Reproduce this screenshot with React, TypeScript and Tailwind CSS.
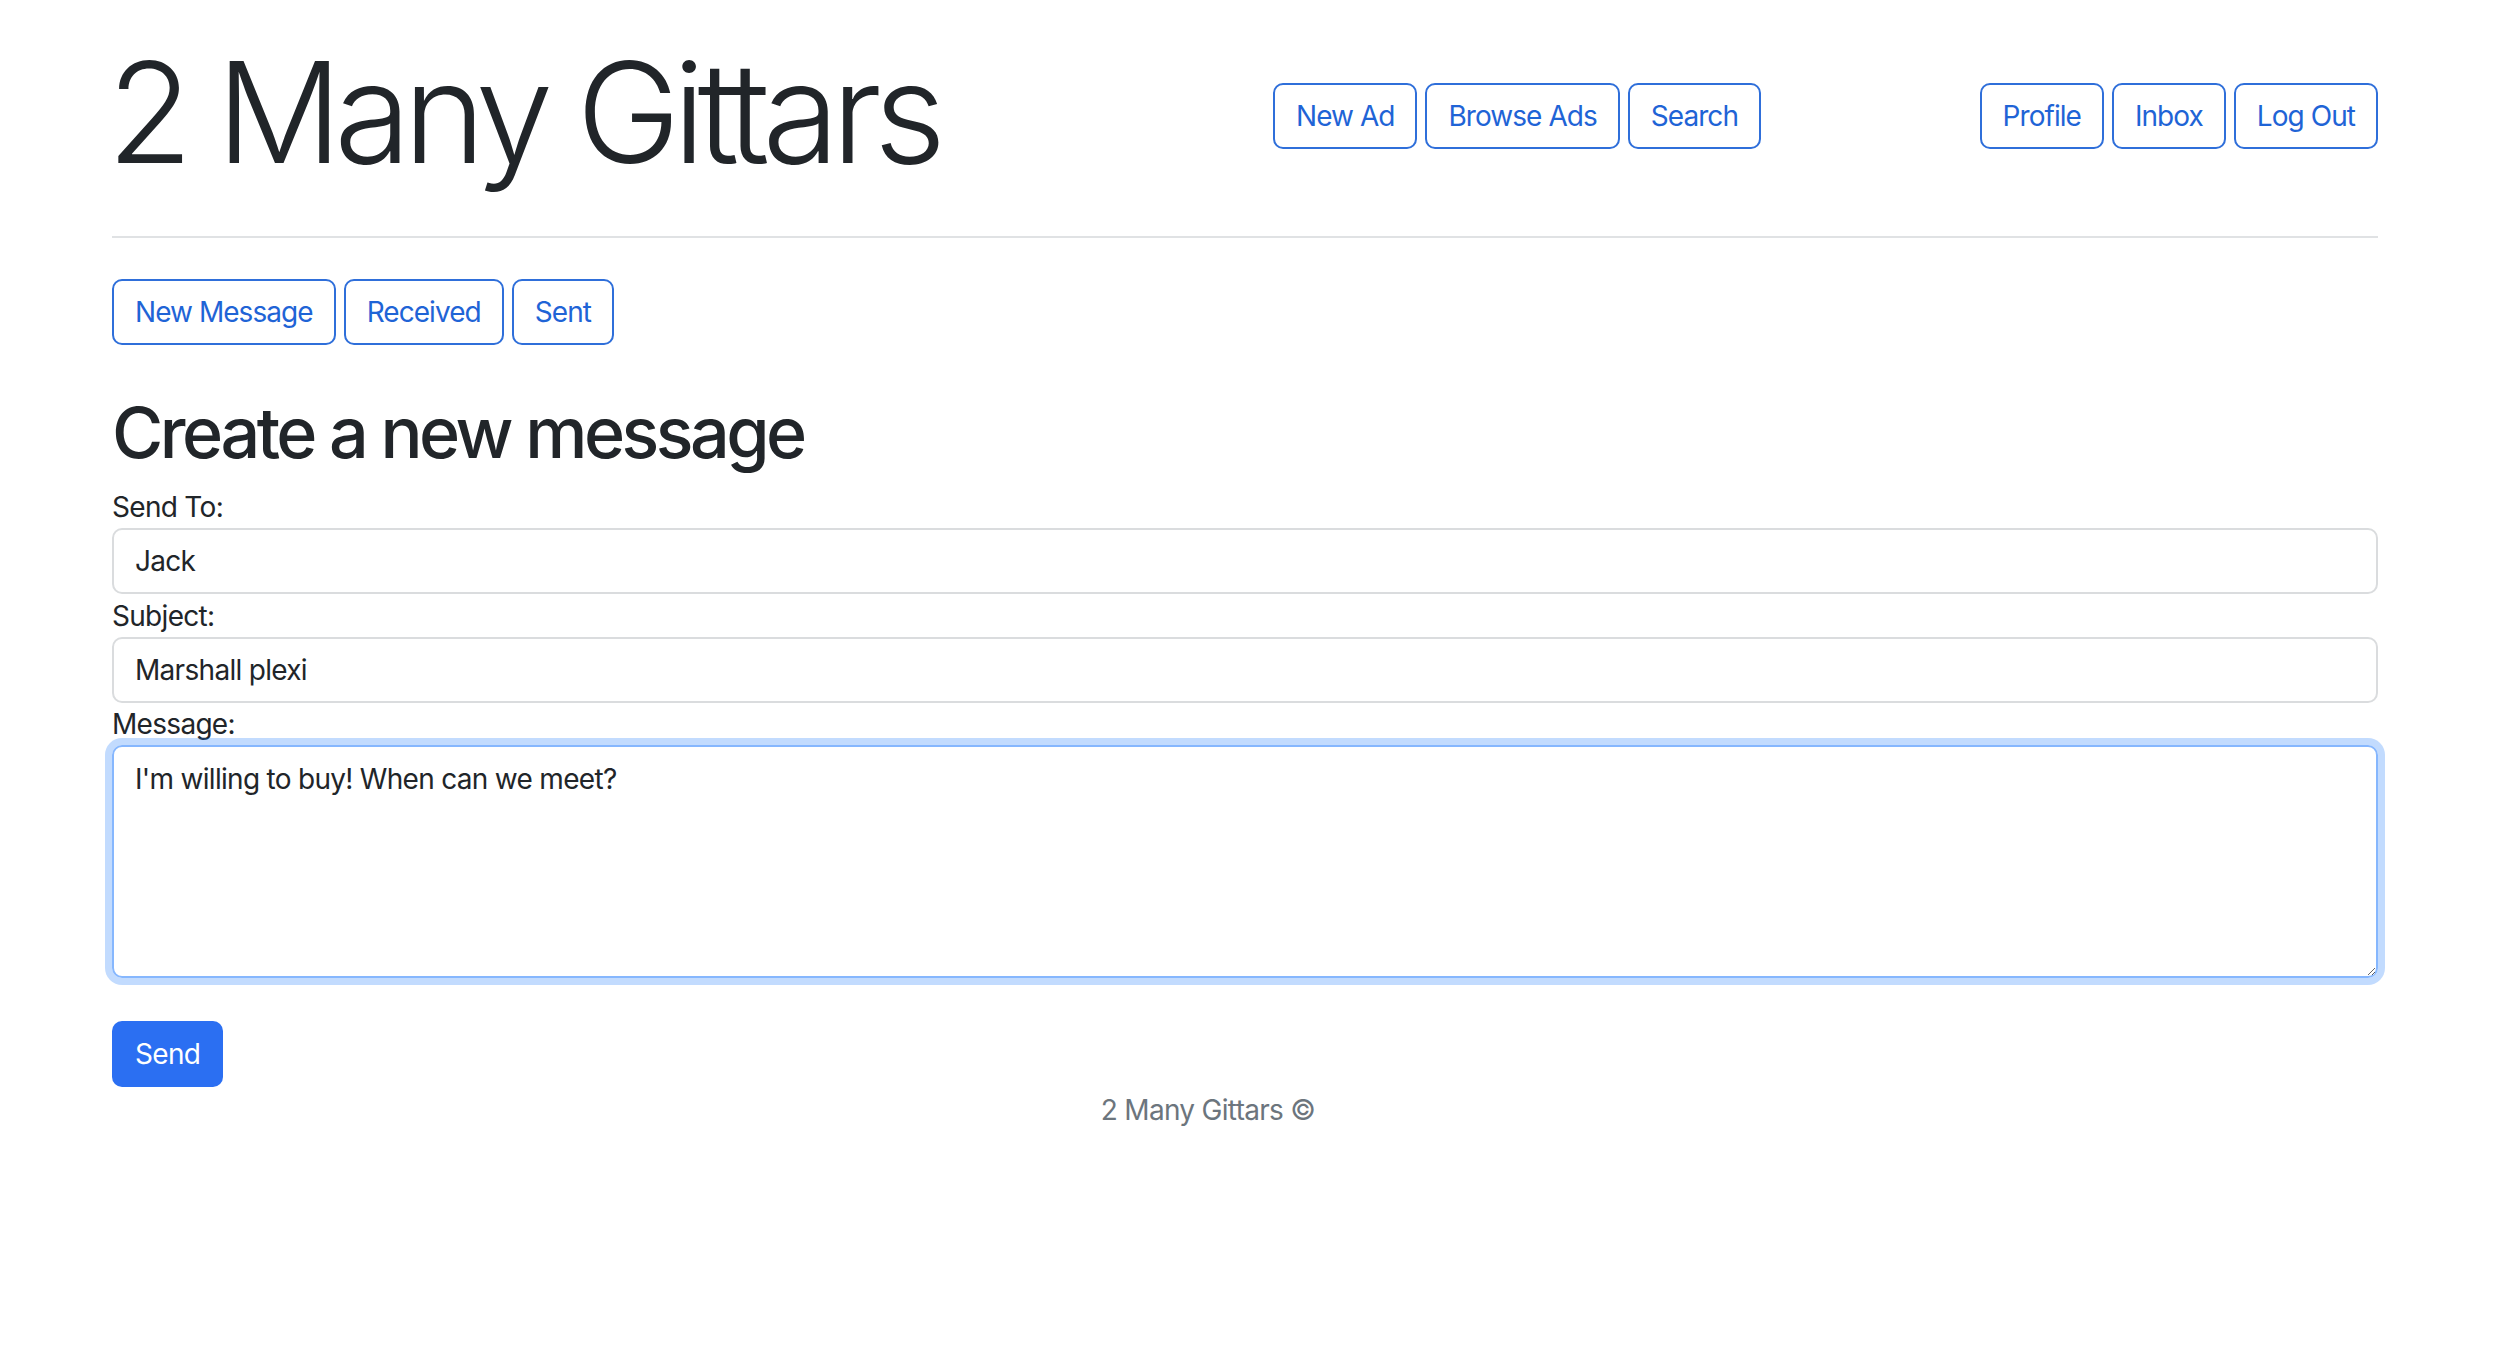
import React from "react";

const outline =
  "h-[66px] flex items-center px-[21px] border-2 border-[#2f6fda] text-[#1f64d6] rounded-[10px] bg-white whitespace-nowrap tracking-[-0.95px]";

const field =
  "h-[66px] px-[21px] border-2 border-[#dadcde] rounded-[10px] outline-none tracking-[-0.7px]";

export default function App() {
  return (
    <div
      className="min-h-screen bg-white text-[#212529] text-[28px] leading-[42px] tracking-[-0.7px]"
      style={{ fontFamily: "Inter, 'Noto Sans', sans-serif" }}
    >
      <div className="mx-[112px] w-[2266px]">
        <header className="flex items-start pt-[28px]">
          <h1 className="w-[1166px] -ml-[5px] text-[140px] leading-[168px] font-light tracking-[-8px] text-[#212529]">
            2 Many Gittars
          </h1>
          <nav className="flex gap-[8px] mt-[55px]">
            <button className={outline}>New Ad</button>
            <button className={outline}>Browse Ads</button>
            <button className={outline}>Search</button>
          </nav>
          <nav className="flex gap-[8px] mt-[55px] ml-auto">
            <button className={outline}>Profile</button>
            <button className={outline}>Inbox</button>
            <button className={outline}>Log Out</button>
          </nav>
        </header>

        <div className="h-[2px] bg-[#e0e2e4] mt-[40px]" />

        <div className="flex gap-[8px] mt-[41px]">
          <button className={outline}>New Message</button>
          <button className={outline}>Received</button>
          <button className={outline}>Sent</button>
        </div>

        <h2 className="mt-[46px] mb-[11px] text-[70px] leading-[84px] font-medium tracking-[-3.5px]">
          Create a new message
        </h2>

        <form className="flex flex-col" onSubmit={(e) => e.preventDefault()}>
          <label className="h-[42px]">Send To:</label>
          <input className={field} defaultValue="Jack" />
          <label className="h-[42px] mt-[1px]">Subject:</label>
          <input className={field} defaultValue="Marshall plexi" />
          <label className="h-[42px]">Message:</label>
          <textarea
            rows={5}
            className="h-[233px] px-[21px] pt-[11px] pb-[9px] border-2 border-[#86b7fe] rounded-[10px] outline-none shadow-[0_0_0_7px_rgba(13,110,253,0.25)] leading-[42px] tracking-[-0.7px]"
            defaultValue="I'm willing to buy! When can we meet?"
          />
          <div className="mt-[43px]">
            <button
              type="submit"
              className="h-[66px] px-[23px] rounded-[10px] bg-[#2b6ff2] text-white"
            >
              Send
            </button>
          </div>
        </form>

        <footer className="text-center text-[#6c757d] pr-[74px] mt-[2px]">2 Many Gittars ©</footer>
      </div>
    </div>
  );
}
